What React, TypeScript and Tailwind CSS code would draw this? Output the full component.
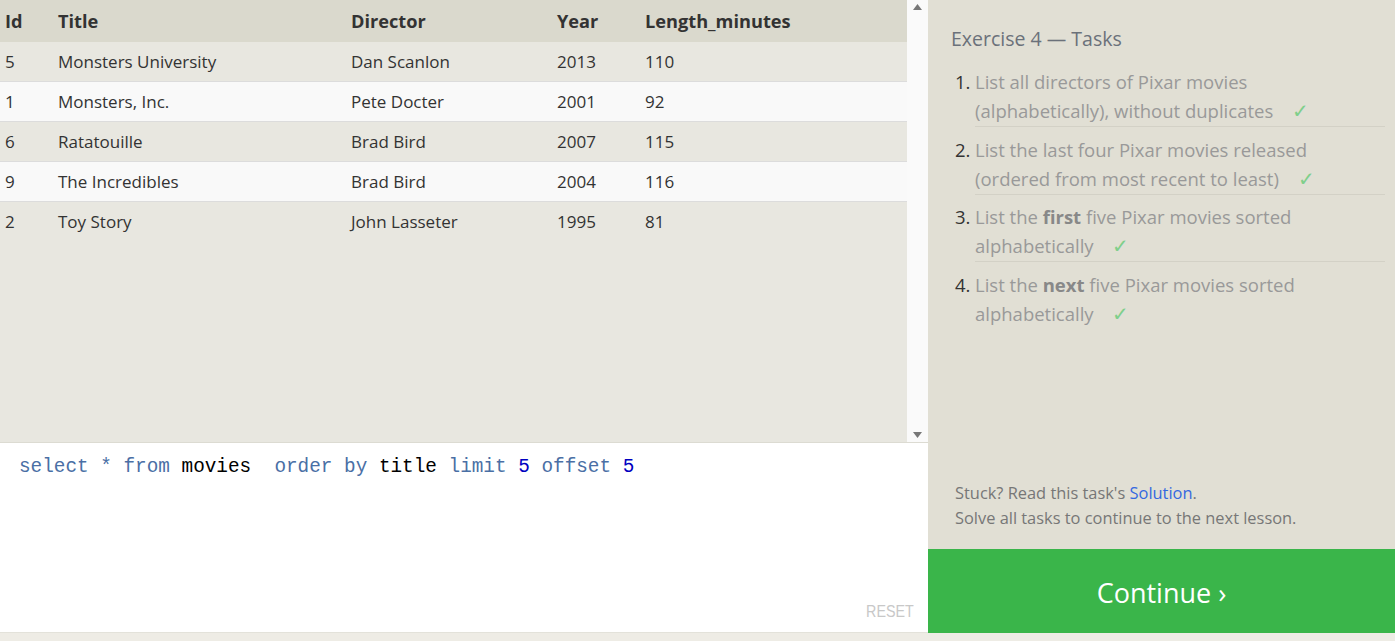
import React from "react";

const rows = [
  { id: 5, title: "Monsters University", director: "Dan Scanlon", year: 2013, len: 110 },
  { id: 1, title: "Monsters, Inc.", director: "Pete Docter", year: 2001, len: 92 },
  { id: 6, title: "Ratatouille", director: "Brad Bird", year: 2007, len: 115 },
  { id: 9, title: "The Incredibles", director: "Brad Bird", year: 2004, len: 116 },
  { id: 2, title: "Toy Story", director: "John Lasseter", year: 1995, len: 81 },
];

const Check = () => <span className="ml-[14px] text-[#7fcf8b] text-[20px]">✓</span>;

const App = () => {
  return (
    <div className="w-[1395px] h-[641px] flex flex-col bg-[#eeece5] font-['Open_Sans',sans-serif] overflow-hidden">
      <div className="flex h-[633px]">
        {/* left: results + editor */}
        <div className="w-[928px] flex flex-col">
          <div className="h-[443px] flex bg-[#e8e7e0] border-b border-[#dcdbd2]">
            <div className="w-[907px] flex flex-col">
              <div className="h-[42px] flex items-center pt-[2px] bg-[#dad9cd] text-[18.2px] font-bold text-[#333]">
                <div className="w-[58px] pl-[5px]">Id</div>
                <div className="w-[293px]">Title</div>
                <div className="w-[206px]">Director</div>
                <div className="w-[88px]">Year</div>
                <div>Length_minutes</div>
              </div>
              {rows.map((r, i) => (
                <div
                  key={r.id}
                  className={
                    "h-[40px] flex items-center pt-[1px] text-[17px] text-[#333] border-b " +
                    (i < rows.length - 1 ? "border-[#dcdcdc] " : "border-transparent ") +
                    (i % 2 === 0 ? "bg-[#e8e7e0]" : "bg-[#f9f9f9]")
                  }
                >
                  <div className="w-[58px] pl-[5px]">{r.id}</div>
                  <div className="w-[293px]">{r.title}</div>
                  <div className="w-[206px]">{r.director}</div>
                  <div className="w-[88px]">{r.year}</div>
                  <div>{r.len}</div>
                </div>
              ))}
            </div>
            <div className="w-[21px] bg-[#fafafa] flex flex-col items-center justify-between py-[3px]">
              <svg width="11" height="8" viewBox="0 0 11 8"><path d="M5.5 1 L10 7 L1 7 Z" fill="#777" /></svg>
              <svg width="11" height="8" viewBox="0 0 11 8"><path d="M1 1 L10 1 L5.5 7 Z" fill="#777" /></svg>
            </div>
          </div>
          <div className="flex-1 bg-white flex flex-col px-[19px] pt-[11px] pb-[8px] border-b border-[#e3e2da]">
            <div className="font-['Liberation_Mono',monospace] text-[19.35px] leading-[26px] whitespace-pre">
              <span className="text-[#4a6fa5]">select</span>
              <span className="text-[#4a6fa5]"> * </span>
              <span className="text-[#4a6fa5]">from</span>
              <span className="text-black"> movies  </span>
              <span className="text-[#4a6fa5]">order by</span>
              <span className="text-black"> title </span>
              <span className="text-[#4a6fa5]">limit</span>
              <span className="text-[#0000c0]"> 5 </span>
              <span className="text-[#4a6fa5]">offset</span>
              <span className="text-[#0000c0]"> 5</span>
            </div>
            <div className="flex-1" />
            <div className="self-end -mr-[5px] font-['Liberation_Sans',sans-serif] text-[17px] text-[#c8c8c8] scale-x-[0.84] origin-right">
              RESET
            </div>
          </div>
        </div>

        {/* right: tasks */}
        <div className="flex-1 flex flex-col bg-[#e1dfd4]">
          <div className="flex-1 flex flex-col pl-[23px] pr-[10px] pt-[24px] pb-[19px]">
            <div className="text-[19.5px] text-[#6b717a]">Exercise 4 — Tasks</div>
            <ol className="mt-[14px] text-[18.5px] leading-[29px] text-[#999]">
              <li className="flex">
                <span className="w-[24px] pl-[4px] text-[#333]">1.</span>
                <div className="flex-1 border-b border-[#d3d1c6] pb-[1px]">
                  List all directors of Pixar movies<br />(alphabetically), without duplicates <Check />
                </div>
              </li>
              <li className="flex mt-[7.5px]">
                <span className="w-[24px] pl-[4px] text-[#333]">2.</span>
                <div className="flex-1 border-b border-[#d3d1c6] pb-[1px]">
                  List the last four Pixar movies released<br />(ordered from most recent to least) <Check />
                </div>
              </li>
              <li className="flex mt-[7.5px]">
                <span className="w-[24px] pl-[4px] text-[#333]">3.</span>
                <div className="flex-1 border-b border-[#d3d1c6] pb-[1px]">
                  List the <b className="text-[#888]">first</b> five Pixar movies sorted<br />alphabetically <Check />
                </div>
              </li>
              <li className="flex mt-[7.5px]">
                <span className="w-[24px] pl-[4px] text-[#333]">4.</span>
                <div className="flex-1 pb-[1px]">
                  List the <b className="text-[#888]">next</b> five Pixar movies sorted<br />alphabetically <Check />
                </div>
              </li>
            </ol>
            <div className="flex-1" />
            <div className="pl-[4px] text-[16.4px] leading-[25px] text-[#777]">
              Stuck? Read this task's <span className="text-[#3468e0]">Solution</span>.
              <br />
              Solve all tasks to continue to the next lesson.
            </div>
          </div>
          <div className="h-[84px] bg-[#3ab54a] flex items-center justify-center pt-[4px] text-white text-[27px]">
            Continue ›
          </div>
        </div>
      </div>
    </div>
  );
};

export default App;
